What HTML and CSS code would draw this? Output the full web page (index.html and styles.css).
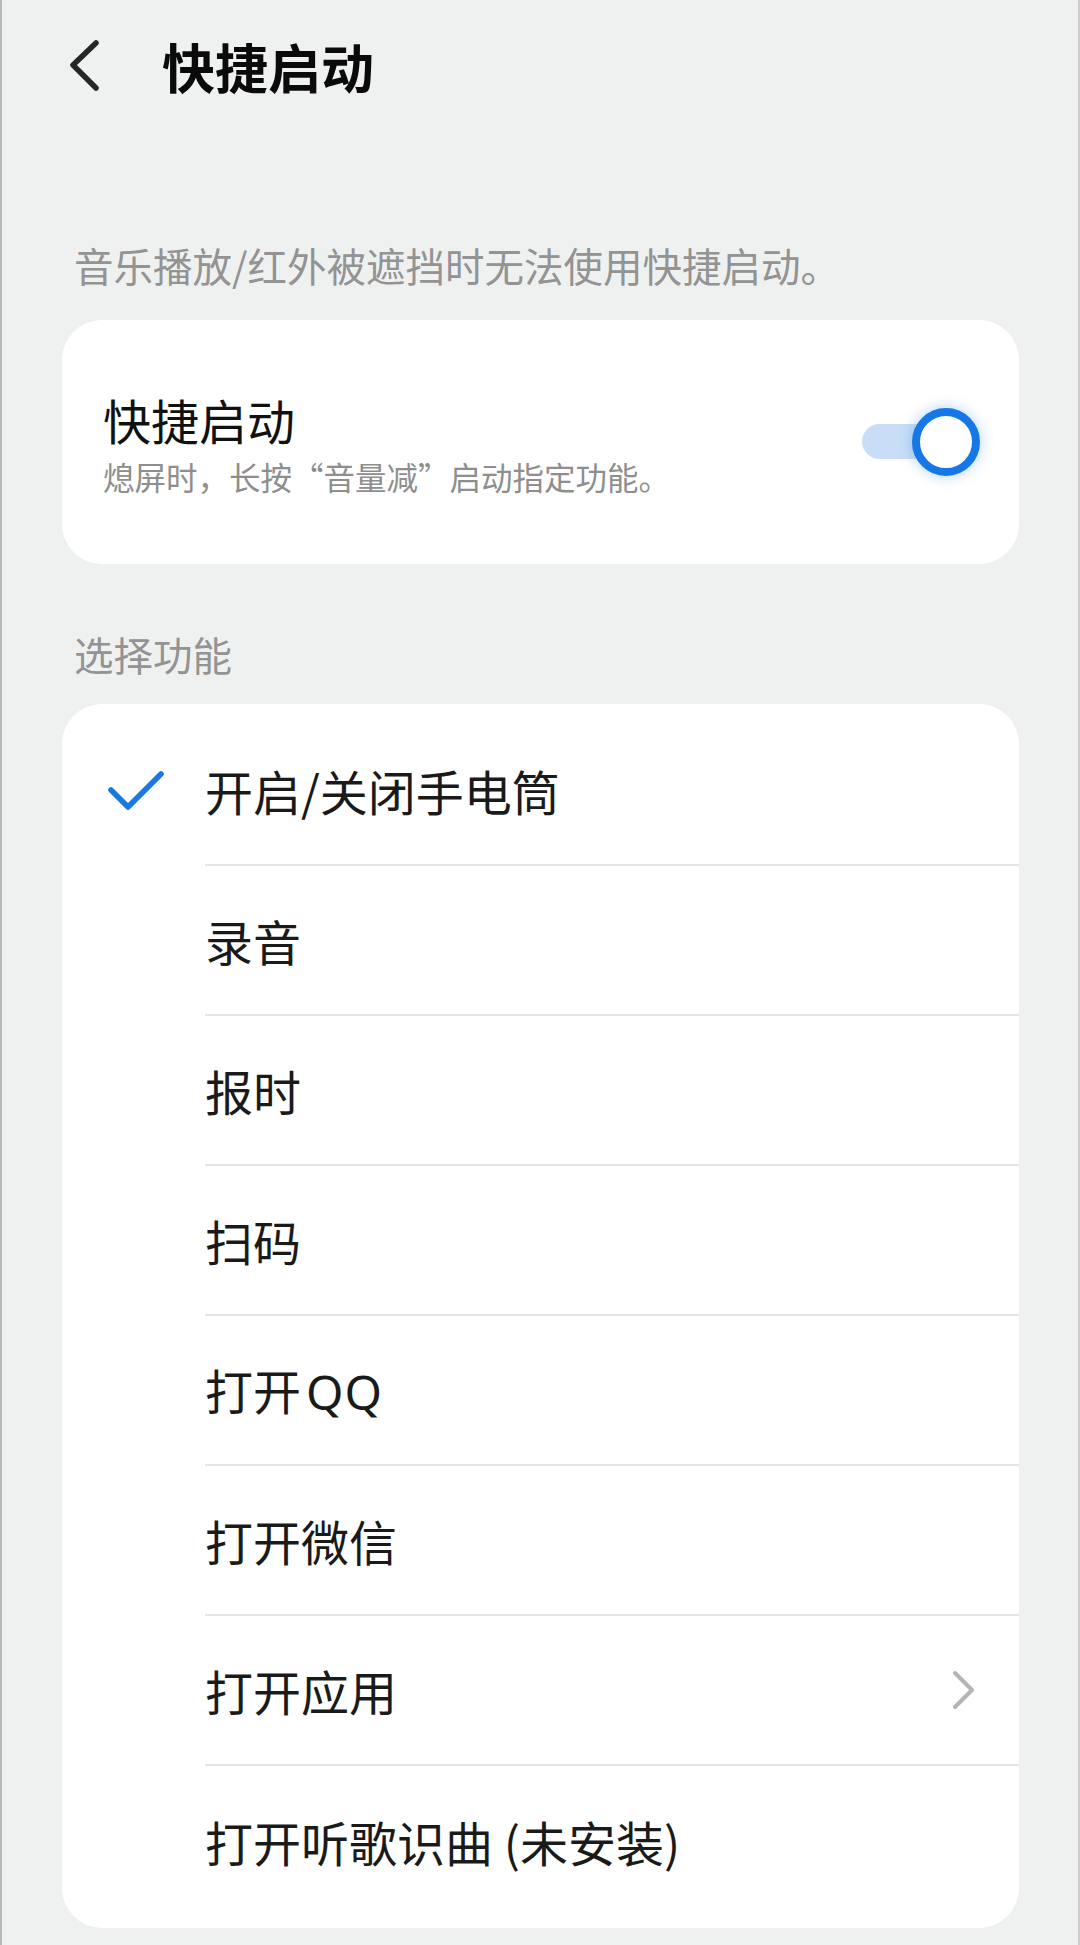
FILE: index.html
```html
<!DOCTYPE html>
<html lang="zh-CN">

<head>
  <meta charset="UTF-8">
  <meta name="viewport" content="width=device-width, initial-scale=1.0">
  <title>快捷启动</title>
  <link rel="stylesheet" href="styles.css">
</head>

<body>
  <div class="screen">
    <header class="top-bar">
      <button class="back" aria-label="返回">
        <svg width="36" height="56" viewBox="0 0 36 56">
          <polyline points="28,5 5,27 28,50" fill="none" stroke="#262626" stroke-width="5.5" stroke-linecap="round" stroke-linejoin="round" />
        </svg>
      </button>
      <h1>快捷启动</h1>
    </header>

    <p class="note">音乐播放/红外被遮挡时无法使用快捷启动。</p>

    <div class="card switch-card">
      <div class="switch-text">
        <div class="switch-title">快捷启动</div>
        <div class="switch-desc">熄屏时，长按“音量减”启动指定功能。</div>
      </div>
      <div class="switch on"></div>
    </div>

    <p class="section-label">选择功能</p>

    <ul class="card options">
      <li class="option">
        <span class="mark">
          <svg width="58" height="42" viewBox="0 0 58 42">
            <polyline points="4,20 21,37 54,4" fill="none" stroke="#1b78e0" stroke-width="5.5" stroke-linecap="round" stroke-linejoin="round" />
          </svg>
        </span>
        <span class="option-body">开启/关闭手电筒</span>
      </li>
      <li class="option"><span class="mark"></span><span class="option-body">录音</span></li>
      <li class="option"><span class="mark"></span><span class="option-body">报时</span></li>
      <li class="option"><span class="mark"></span><span class="option-body">扫码</span></li>
      <li class="option"><span class="mark"></span><span class="option-body"><span>打开<span class="latin">QQ</span></span></span></li>
      <li class="option"><span class="mark"></span><span class="option-body">打开微信</span></li>
      <li class="option">
        <span class="mark"></span>
        <span class="option-body">打开应用
          <svg class="chevron" width="26" height="40" viewBox="0 0 26 40">
            <polyline points="4,3 21,20 4,37" fill="none" stroke="#b4b4b4" stroke-width="4" stroke-linecap="round" stroke-linejoin="round" />
          </svg>
        </span>
      </li>
      <li class="option"><span class="mark"></span><span class="option-body">打开听歌识曲 (未安装)</span></li>
    </ul>
  </div>
</body>

</html>
```

FILE: styles.css
```css
:root {
  --page-bg: #eff1f1;
  --card-bg: #ffffff;
  --text: #1a1a1a;
  --muted: #939393;
  --blue: #1677e6;
  --line: #e3e3e3;
}

*,
*::before,
*::after {
  box-sizing: border-box;
}

body {
  margin: 0;
  background: var(--page-bg);
  font-family: "Noto Sans CJK SC", "Noto Sans", sans-serif;
  color: var(--text);
}

.screen {
  width: 1080px;
  min-height: 1945px;
  border-left: 2px solid #b9b9b9;
  border-right: 2px solid #cdcdcd;
}

.top-bar {
  display: flex;
  align-items: center;
  height: 132px;
  padding-left: 66px;
}

.back {
  display: flex;
  padding: 0;
  border: none;
  background: none;
  margin-right: 58px;
}

.top-bar h1 {
  margin: 0;
  font-size: 53px;
  font-weight: 700;
  color: #0a0a0a;
  line-height: 56px;
}

.note,
.section-label {
  margin: 0;
  padding-left: 72px;
  font-size: 39.5px;
  line-height: 56px;
  color: var(--muted);
}

.note {
  margin-top: 105px;
}

.card {
  margin: 27px 59px 0 60px;
  background: var(--card-bg);
  border-radius: 40px;
}

.switch-card {
  display: flex;
  align-items: center;
  justify-content: space-between;
  height: 244px;
  padding: 0 39px 0 41px;
}

.switch-text {
  margin-top: 5px;
}

.switch-title {
  font-size: 48px;
  line-height: 56px;
  color: #111;
}

.switch-desc {
  margin-top: 7px;
  font-size: 31.5px;
  line-height: 44px;
  color: #8e8e8e;
}

.switch {
  position: relative;
  width: 118px;
  height: 68px;
}

.switch::before {
  content: "";
  position: absolute;
  left: 0;
  top: 16px;
  width: 90px;
  height: 35px;
  border-radius: 18px;
  background: #c9def6;
}

.switch::after {
  content: "";
  position: absolute;
  right: 0;
  top: 0;
  width: 68px;
  height: 68px;
  border-radius: 50%;
  border: 8px solid var(--blue);
  background: #fff;
  box-shadow: 0 0 14px rgba(22, 119, 230, 0.35);
}

.section-label {
  margin-top: 62px;
}

.options {
  list-style: none;
  margin-top: 22px;
  padding: 12px 0;
}

.option {
  display: flex;
  height: 150px;
}

.mark {
  display: flex;
  align-items: center;
  width: 143px;
  padding-left: 45px;
}

.option-body {
  flex: 1;
  display: flex;
  align-items: center;
  justify-content: space-between;
  padding-right: 42px;
  border-bottom: 2px solid var(--line);
  font-size: 48px;
  line-height: 60px;
}

.option:last-child .option-body {
  border-bottom: none;
}

.latin {
  font-family: "Noto Sans", sans-serif;
  margin-left: 5px;
  letter-spacing: 1px;
}
```
